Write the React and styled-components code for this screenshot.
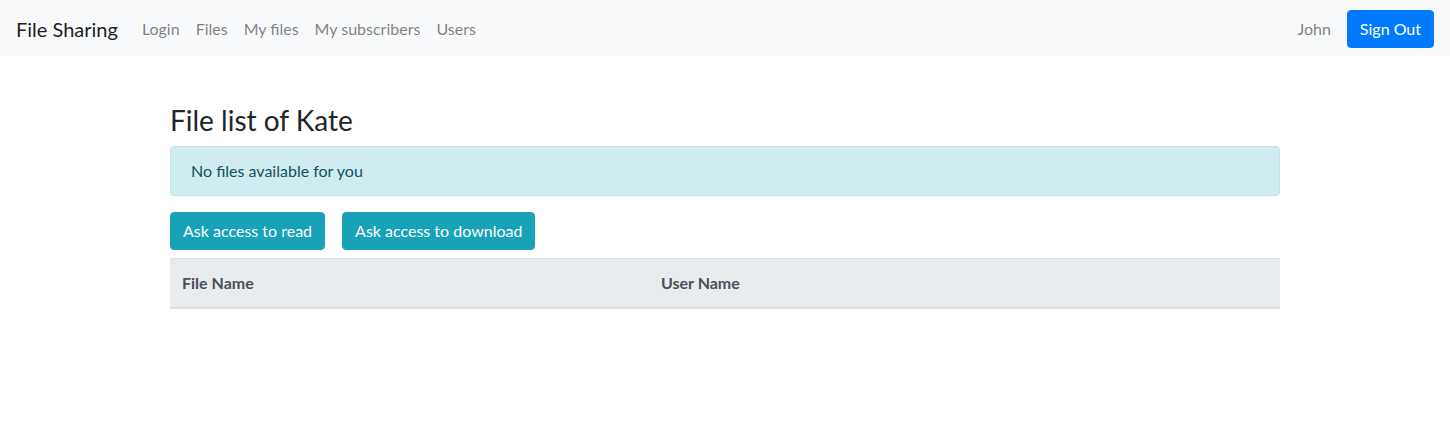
import React from "react";
import styled, { createGlobalStyle } from "styled-components";

const Global = createGlobalStyle`
  * { box-sizing: border-box; }
  body {
    margin: 0;
    font-family: "Lato", "Segoe UI", "Liberation Sans", sans-serif;
    font-size: 16px;
    line-height: 1.5;
    color: #212529;
    background: #fff;
  }
`;

const Navbar = styled.nav`
  display: flex;
  align-items: center;
  justify-content: space-between;
  height: 56px;
  padding: 9px 16px 7px;
  background: #f8f9fa;
`;

const Side = styled.div`
  display: flex;
  align-items: center;
`;

const Brand = styled.a`
  font-size: 20px;
  line-height: 30px;
  color: rgba(0, 0, 0, 0.9);
  margin-right: 16px;
  text-decoration: none;
`;

const NavLink = styled.a`
  padding: 8px;
  color: rgba(0, 0, 0, 0.5);
  text-decoration: none;
  line-height: 24px;
`;

const Button = styled.button`
  font-family: inherit;
  font-size: 16px;
  line-height: 24px;
  padding: 6px 12px;
  border-radius: 4px;
  border: 1px solid ${(p) => p.$bg};
  background: ${(p) => p.$bg};
  color: #fff;
  margin-left: ${(p) => p.$ml || 0}px;
  cursor: pointer;
`;

const Container = styled.main`
  width: 1140px;
  margin: 48px auto 0;
  padding: 0 15px;
`;

const Title = styled.h3`
  margin: 0 0 8px;
  font-size: 28px;
  font-weight: 400;
  line-height: 1.2;
`;

const Alert = styled.div`
  padding: 12px 20px;
  margin-bottom: 16px;
  border: 1px solid #bee5eb;
  border-radius: 4px;
  background: #d1ecf1;
  color: #0c5460;
`;

const Actions = styled.div`
  display: flex;
  gap: 17px;
  margin-bottom: 8px;
`;

const Table = styled.table`
  width: 100%;
  border-collapse: collapse;
`;

const Th = styled.th`
  text-align: left;
  padding: 12px;
  background: #e9ecef;
  color: #495057;
  font-weight: 700;
  border-top: 1px solid #dee2e6;
  border-bottom: 2px solid #dee2e6;
  width: ${(p) => p.$w || "auto"};
`;

export default function App() {
  return (
    <>
      <Global />
      <Navbar>
        <Side>
          <Brand href="#">File Sharing</Brand>
          <NavLink href="#">Login</NavLink>
          <NavLink href="#">Files</NavLink>
          <NavLink href="#">My files</NavLink>
          <NavLink href="#">My subscribers</NavLink>
          <NavLink href="#">Users</NavLink>
        </Side>
        <Side>
          <NavLink href="#">John</NavLink>
          <Button $bg="#007bff" $ml={8}>Sign Out</Button>
        </Side>
      </Navbar>
      <Container>
        <Title>File list of Kate</Title>
        <Alert>No files available for you</Alert>
        <Actions>
          <Button $bg="#17a2b8">Ask access to read</Button>
          <Button $bg="#17a2b8">Ask access to download</Button>
        </Actions>
        <Table>
          <thead>
            <tr>
              <Th $w="479px">File Name</Th>
              <Th>User Name</Th>
            </tr>
          </thead>
        </Table>
      </Container>
    </>
  );
}
